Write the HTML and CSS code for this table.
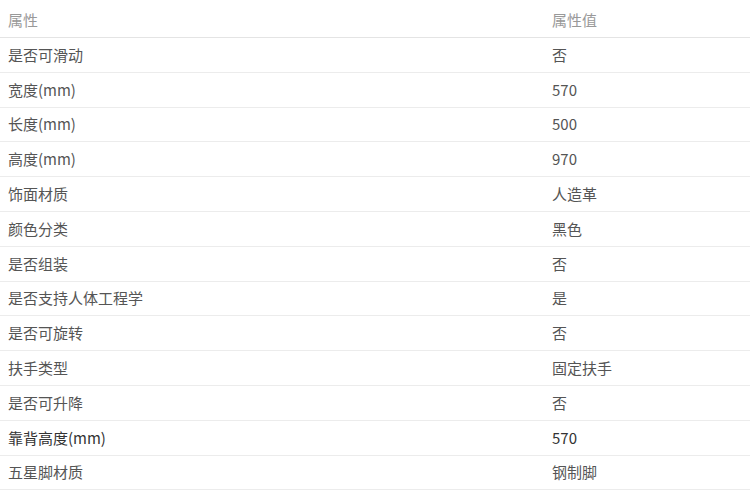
FILE: index.html
```html
<!DOCTYPE html>
<html lang="zh">
<head>
<meta charset="utf-8">
<link rel="stylesheet" href="styles.css">
</head>
<body>
<table class="props">
  <thead>
    <tr><th>属性</th><th>属性值</th></tr>
  </thead>
  <tbody>
    <tr><td>是否可滑动</td><td>否</td></tr>
    <tr><td>宽度(mm)</td><td>570</td></tr>
    <tr><td>长度(mm)</td><td>500</td></tr>
    <tr><td>高度(mm)</td><td>970</td></tr>
    <tr><td>饰面材质</td><td>人造革</td></tr>
    <tr><td>颜色分类</td><td>黑色</td></tr>
    <tr><td>是否组装</td><td>否</td></tr>
    <tr><td>是否支持人体工程学</td><td>是</td></tr>
    <tr><td>是否可旋转</td><td>否</td></tr>
    <tr><td>扶手类型</td><td>固定扶手</td></tr>
    <tr><td>是否可升降</td><td>否</td></tr>
    <tr><td class="dark">靠背高度(mm)</td><td class="dark">570</td></tr>
    <tr><td>五星脚材质</td><td>钢制脚</td></tr>
  </tbody>
</table>
</body>
</html>
```
FILE: styles.css
```css
html, body {
  margin: 0;
  padding: 0;
  background: #fff;
}
body {
  font-family: "Noto Sans CJK SC", "Noto Sans", sans-serif;
  font-size: 15px;
  color: #555;
}
.props {
  width: 100%;
  border-collapse: collapse;
}
.props th,
.props td {
  text-align: left;
  padding: 0 8px;
  font-weight: normal;
  border-bottom: 1px solid #ececec;
  height: 33.8px;
  line-height: 20px;
}
.props th {
  color: #999;
  height: 35px;
  padding-top: 2px;
  border-bottom: 1px solid #e4e4e4;
}
.props th:first-child,
.props td:first-child {
  width: 528px;
}
.props td.dark {
  color: #333;
}
```
